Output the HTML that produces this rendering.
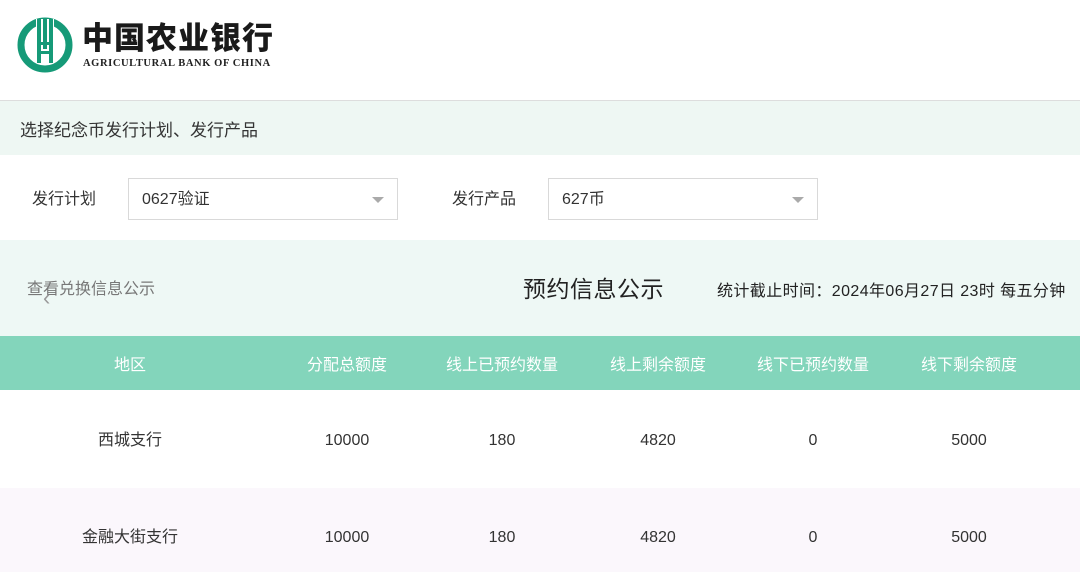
<!DOCTYPE html>
<html><head><meta charset="utf-8"><style>
body{margin:0;width:1080px;height:572px;overflow:hidden;background:#fff;font-family:"Liberation Sans","Noto Sans CJK SC",sans-serif;color:#333;position:relative}
.a{position:absolute}
.sel{position:absolute;top:178px;height:42px;border:1px solid #d9d9d9;box-sizing:border-box;background:#fff;font-size:16px;line-height:40px;padding-left:13px;color:#333}
.sel span{position:relative;top:1px}
.sel:after{content:"";position:absolute;right:13px;top:18px;border-left:6px solid transparent;border-right:6px solid transparent;border-top:6px solid #aaa}
.th,.td{position:absolute;text-align:center;width:160px;font-size:16px}
.th{color:#fff;top:351px}
.n{top:432px}.m{top:529px}
.c1{top:426px}.c2{top:523px}
</style></head><body>
<svg class="a" style="left:16px;top:16px" width="58" height="58" viewBox="0 0 58 58">
<circle cx="29" cy="29" r="24" fill="none" stroke="#169a78" stroke-width="7"/>
<rect x="20" y="3" width="18" height="14" fill="#fff"/>
<rect x="21" y="3" width="4" height="44" fill="#169a78"/><rect x="33" y="3" width="4" height="44" fill="#169a78"/>
<rect x="27" y="3" width="4" height="30" fill="#169a78"/>
<rect x="21" y="26" width="16" height="3" fill="#169a78"/><rect x="21" y="35" width="16" height="3" fill="#169a78"/>
</svg>
<div class="a" style="left:82px;top:13px;font-size:31px;font-weight:900;color:#1a1a1a;letter-spacing:1px;font-family:'Noto Sans CJK SC',sans-serif">中国农业银行</div>
<div class="a" style="left:83px;top:58px;font-size:10.5px;font-weight:bold;font-family:'Liberation Serif',serif;color:#222;letter-spacing:0.6px">AGRICULTURAL BANK OF CHINA</div>
<div class="a" style="left:0;top:100px;width:1080px;height:1px;background:#ddd"></div>
<div class="a" style="left:0;top:101px;width:1080px;height:54px;background:#eef7f3"></div>
<div class="a" style="left:20px;top:116px;font-size:17px;color:#333">选择纪念币发行计划、发行产品</div>
<div class="a" style="left:32px;top:185px;font-size:16px">发行计划</div>
<div class="sel" style="left:128px;width:270px"><span>0627验证</span></div>
<div class="a" style="left:452px;top:185px;font-size:16px">发行产品</div>
<div class="sel" style="left:548px;width:270px"><span>627币</span></div>
<div class="a" style="left:0;top:240px;width:1080px;height:96px;background:#eef8f5"></div>
<div class="a" style="left:27px;top:275px;font-size:16px;color:#777">查看兑换信息公示</div>
<div class="a" style="left:43px;top:285px;font-size:22px;color:#999">‹</div>
<div class="a" style="left:523px;top:270px;font-size:23px;color:#222;letter-spacing:0.5px">预约信息公示</div>
<div class="a" style="left:717px;top:277px;font-size:16px;color:#222;white-space:nowrap;letter-spacing:0.4px">统计截止时间：2024年06月27日 23时 每五分钟</div>
<div class="a" style="left:0;top:336px;width:1080px;height:54px;background:#83d5bb"></div>
<div class="th" style="left:50px">地区</div>
<div class="th" style="left:267px">分配总额度</div>
<div class="th" style="left:422px">线上已预约数量</div>
<div class="th" style="left:578px">线上剩余额度</div>
<div class="th" style="left:733px">线下已预约数量</div>
<div class="th" style="left:889px">线下剩余额度</div>
<div class="a" style="left:0;top:488px;width:1080px;height:84px;background:#fbf7fc"></div>
<div class="td c1" style="left:50px">西城支行</div>
<div class="td n" style="left:267px">10000</div>
<div class="td n" style="left:422px">180</div>
<div class="td n" style="left:578px">4820</div>
<div class="td n" style="left:733px">0</div>
<div class="td n" style="left:889px">5000</div>
<div class="td c2" style="left:50px">金融大街支行</div>
<div class="td m" style="left:267px">10000</div>
<div class="td m" style="left:422px">180</div>
<div class="td m" style="left:578px">4820</div>
<div class="td m" style="left:733px">0</div>
<div class="td m" style="left:889px">5000</div>
</body></html>
